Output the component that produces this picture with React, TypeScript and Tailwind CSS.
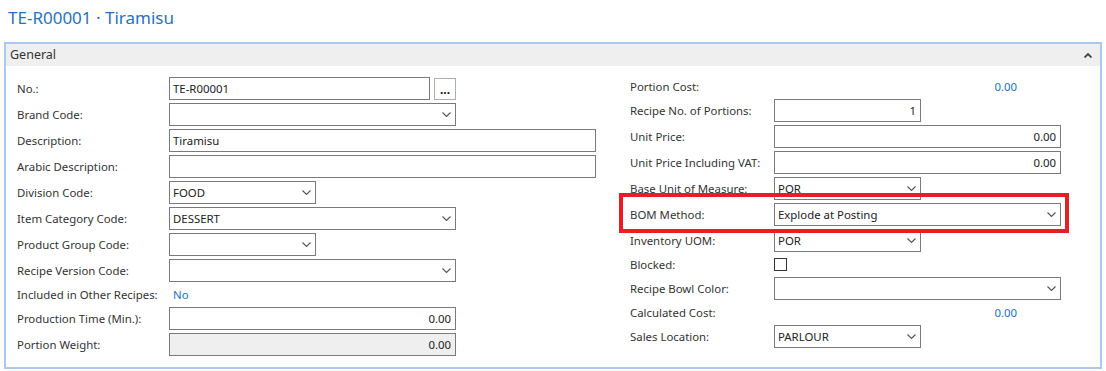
import React from "react";

const font = { fontFamily: '"Segoe UI", "Noto Sans", sans-serif' };

function Chevron() {
  return (
    <svg width="9" height="5" viewBox="0 0 9 5" className="shrink-0">
      <path d="M0.5 0.5 L4.5 4.5 L8.5 0.5" fill="none" stroke="#555" strokeWidth="1.1" />
    </svg>
  );
}

function Box({ w, value, align = "left", select = false, gray = false }: { w: string; value?: string; align?: "left" | "right"; select?: boolean; gray?: boolean }) {
  return (
    <div className={`${w} h-[23px] border border-[#7a7a7a] flex items-center pl-[3px] pr-[4px] ${gray ? "bg-[#efefef]" : "bg-white"}`}>
      <span className={`flex-1 text-[11.4px] text-[#212121] leading-none ${align === "right" ? "text-right" : ""}`}>{value}</span>
      {select && <Chevron />}
    </div>
  );
}

function Row({ label, labelW, children, h = "h-[23px]" }: { label: string; labelW: string; children?: React.ReactNode; h?: string }) {
  return (
    <div className={`flex items-center ${h}`}>
      <div className={`${labelW} shrink-0 text-[11.4px] text-[#333] leading-none`}>{label}</div>
      {children}
    </div>
  );
}

export default function App() {
  const L = "w-[152px]";
  const R = "w-[144px]";
  return (
    <div className="w-[1106px] h-[371px] bg-white overflow-hidden" style={font}>
      <div className="h-[42px] pl-[8px] pt-[6px] text-[17px] leading-[24px] text-[#2672c4]">TE-R00001 · Tiramisu</div>
      <div className="mx-[4px] h-[327px] border-2 border-[#aac9f0] flex flex-col">
        <div className="h-[22px] bg-[#efefef] flex items-center justify-between pl-[4px] pr-[8px]">
          <span className="text-[12.5px] text-[#333] leading-none">General</span>
          <svg width="8" height="5" viewBox="0 0 8 5">
            <path d="M0.5 4.5 L4 1 L7.5 4.5" fill="none" stroke="#444" strokeWidth="1.8" />
          </svg>
        </div>
        <div className="flex pt-[11px] pl-[11px]">
          <div className="w-[613px] flex flex-col gap-[3px]">
            <Row label="No.:" labelW={L}>
              <Box w="w-[261px]" value="TE-R00001" />
              <div className="ml-[4px] w-[22px] h-[22px] border border-[#adadad] flex items-end justify-center pb-[3px] text-[12px] font-bold leading-none text-[#111]">...</div>
            </Row>
            <Row label="Brand Code:" labelW={L}><Box w="w-[287px]" select /></Row>
            <Row label="Description:" labelW={L}><Box w="w-[427px]" value="Tiramisu" /></Row>
            <Row label="Arabic Description:" labelW={L}><Box w="w-[427px]" /></Row>
            <Row label="Division Code:" labelW={L}><Box w="w-[147px]" value="FOOD" select /></Row>
            <Row label="Item Category Code:" labelW={L}><Box w="w-[287px]" value="DESSERT" select /></Row>
            <Row label="Product Group Code:" labelW={L}><Box w="w-[147px]" select /></Row>
            <Row label="Recipe Version Code:" labelW={L}><Box w="w-[287px]" select /></Row>
            <Row label="Included in Other Recipes:" labelW={L} h="h-[19px]">
              <span className="pl-[4px] text-[11.4px] leading-none text-[#1570d0]">No</span>
            </Row>
            <Row label="Production Time (Min.):" labelW={L}><Box w="w-[287px]" value="0.00" align="right" /></Row>
            <Row label="Portion Weight:" labelW={L}><Box w="w-[287px]" value="0.00" align="right" gray /></Row>
          </div>
          <div className="flex-1 flex flex-col gap-[3px]">
            <Row label="Portion Cost:" labelW={R} h="h-[19px]">
              <span className="w-[243px] text-right text-[11.4px] leading-none text-[#1570d0]">0.00</span>
            </Row>
            <Row label="Recipe No. of Portions:" labelW={R}><Box w="w-[147px]" value="1" align="right" /></Row>
            <Row label="Unit Price:" labelW={R}><Box w="w-[287px]" value="0.00" align="right" /></Row>
            <Row label="Unit Price Including VAT:" labelW={R}><Box w="w-[287px]" value="0.00" align="right" /></Row>
            <Row label="Base Unit of Measure:" labelW={R}><Box w="w-[147px]" value="POR" select /></Row>
            <div className="relative">
              <Row label="BOM Method:" labelW={R}><Box w="w-[287px]" value="Explode at Posting" select /></Row>
              <div className="absolute left-[-11px] top-[-10px] w-[450px] h-[40px] border-4 border-[#ec1c24]" />
            </div>
            <Row label="Inventory UOM:" labelW={R}><Box w="w-[147px]" value="POR" select /></Row>
            <Row label="Blocked:" labelW={R} h="h-[19px]">
              <div className="w-[13px] h-[13px] border border-[#333] bg-white" />
            </Row>
            <Row label="Recipe Bowl Color:" labelW={R}><Box w="w-[287px]" select /></Row>
            <Row label="Calculated Cost:" labelW={R} h="h-[19px]">
              <span className="w-[243px] text-right text-[11.4px] leading-none text-[#1570d0]">0.00</span>
            </Row>
            <Row label="Sales Location:" labelW={R}><Box w="w-[147px]" value="PARLOUR" select /></Row>
          </div>
        </div>
      </div>
    </div>
  );
}
